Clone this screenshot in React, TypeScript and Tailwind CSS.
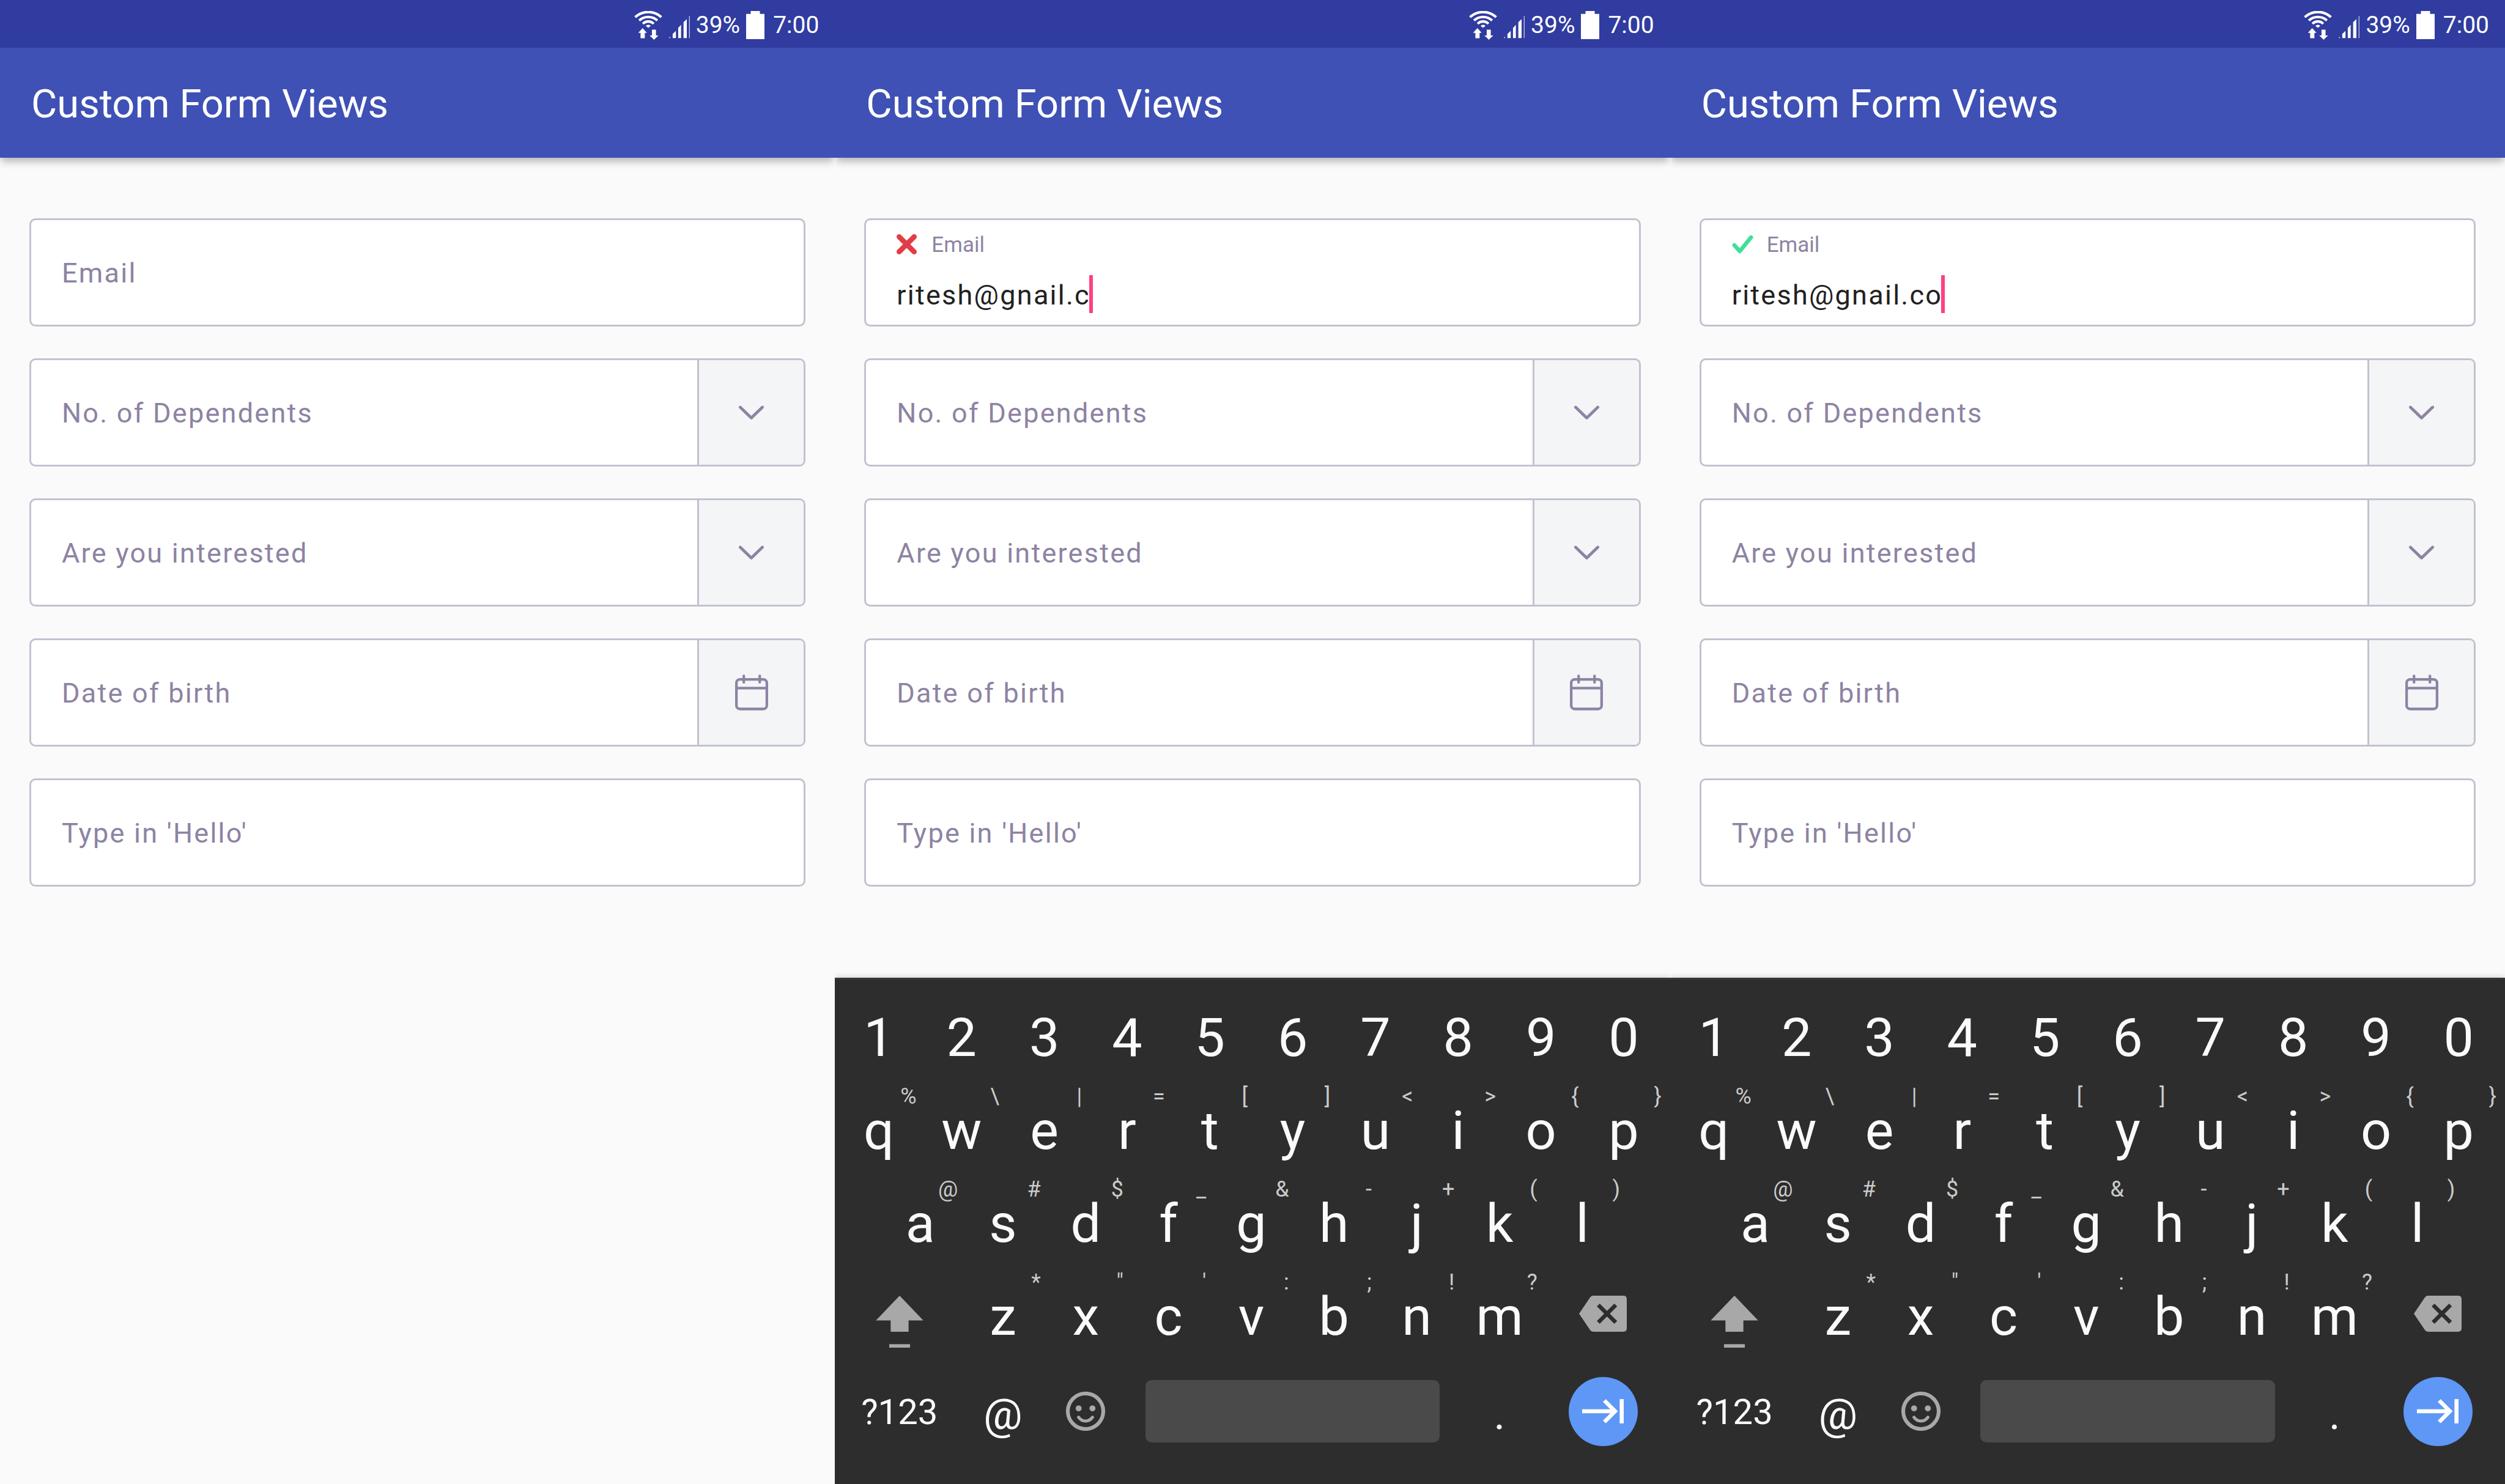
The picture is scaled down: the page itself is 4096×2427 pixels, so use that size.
import React, { useId } from "react";

type EmailState = {
  value: string;
  valid: boolean;
};

function WifiIcon() {
  return (
    <svg viewBox="0 0 146 149" className="h-[47px] w-[46px]" fill="none" stroke="#fff" strokeWidth="13" aria-hidden="true">
      <path d="M5 32A99 99 0 0 1 141 32" />
      <path d="M26 49A70 70 0 0 1 120 49" />
      <path d="M45 66A39 39 0 0 1 101 66" />
      <g fill="#fff" stroke="none">
        <path d="M60 77Q73 66 86 77L73 87Z" />
        <path d="M43.500 89L66 113H55V141H33V113H21Z" />
        <path d="M92 97H113V127H126L103 149L80 127H92Z" />
      </g>
    </svg>
  );
}

function SignalIcon() {
  return (
    <svg viewBox="0 0 112 149" className="h-[47px] w-[35px]" fill="#fff" aria-hidden="true">
      <path d="M2 141L9 134V141Z" />
      <path d="M22 141V119L39 103V141Z" />
      <path d="M51 141V88L66 71V141Z" />
      <path d="M79 141V58L96 42V141Z" />
      <path d="M108 141V27L111 24V141Z" />
    </svg>
  );
}

function BatteryIcon() {
  return (
    <svg viewBox="0 0 32 49" className="h-[46px] w-[30px]" fill="#fff" aria-hidden="true">
      <path d="M8 0H24V5H32V49H0V5H8Z" />
    </svg>
  );
}

function CrossIcon() {
  return (
    <svg viewBox="0 0 35 35" className="size-[33px]" stroke="#e23d46" strokeWidth="9" strokeLinecap="round" aria-hidden="true">
      <path d="M4.500 4.500L30.500 30.500M30.500 4.500L4.500 30.500" />
    </svg>
  );
}

function TickIcon() {
  return (
    <svg viewBox="0 0 37 35" className="h-[33px] w-[35px]" fill="none" stroke="#3fe09a" strokeWidth="7" strokeLinecap="round" strokeLinejoin="round" aria-hidden="true">
      <path d="M4 19L13.500 29.500L33 5.500" />
    </svg>
  );
}

function ChevronIcon() {
  return (
    <svg viewBox="0 0 43 25" className="h-6 w-[41px]" fill="none" stroke="#8d83a3" strokeWidth="5" strokeLinecap="round" strokeLinejoin="round" aria-hidden="true">
      <path d="M2.500 3L21.500 21.500L40.500 3" />
    </svg>
  );
}

function CalendarIcon() {
  return (
    <svg viewBox="0 0 57 62" className="h-[59px] w-[54px]" fill="none" stroke="#8d83a3" strokeWidth="4.500" aria-hidden="true">
      <rect x="2.250" y="8.500" width="52.500" height="51" rx="6" />
      <path d="M2.250 23.500H54.750" />
      <path d="M15 2.500V13.500M42.500 2.500V13.500" strokeLinecap="round" />
    </svg>
  );
}

function ShiftIcon() {
  return (
    <svg viewBox="0 0 82 90" className="h-[85px] w-[78px]" fill="#a8a8a8" aria-hidden="true">
      <path d="M41 0L82 43H56.500V62.500H25.500V43H0Z" />
      <rect x="23" y="84" width="36" height="6" />
    </svg>
  );
}

function DeleteIcon() {
  return (
    <svg viewBox="0 0 82 62" className="h-[59px] w-[78px]" aria-hidden="true">
      <path d="M0 31L19 3Q21 0 24 0H76Q82 0 82 6V56Q82 62 76 62H24Q21 62 19 59Z" fill="#a8a8a8" />
      <path d="M33 16L63 46M63 16L33 46" stroke="#2d2d2d" strokeWidth="7" />
    </svg>
  );
}

function SmileIcon() {
  return (
    <svg viewBox="0 0 68 68" className="size-16" fill="none" aria-hidden="true">
      <circle cx="34" cy="34" r="30.800" stroke="#a8a8a8" strokeWidth="6.500" />
      <circle cx="22" cy="29" r="5.200" fill="#a8a8a8" />
      <circle cx="46" cy="29" r="5.200" fill="#a8a8a8" />
      <path d="M22 44.500Q26.500 51 34 51T46 44.500" stroke="#a8a8a8" strokeWidth="5.500" strokeLinecap="round" />
    </svg>
  );
}

function NextIcon() {
  return (
    <svg viewBox="0 0 72 42" className="h-10 w-[68px]" fill="none" stroke="#fff" strokeWidth="7" aria-hidden="true">
      <path d="M0 21H56" />
      <path d="M38.500 2.500L57 21L38.500 39.500" />
      <path d="M68.500 0V42" />
    </svg>
  );
}

function StatusBar() {
  return (
    <div className="flex h-[78px] items-center justify-end bg-[#303c9f] pt-1 pr-[26px] text-[39px] leading-none text-white">
      <WifiIcon />
      <span className="ml-[10px] flex">
        <SignalIcon />
      </span>
      <span className="ml-[10px]">39%</span>
      <span className="ml-[10px] flex">
        <BatteryIcon />
      </span>
      <time className="ml-[14px]">7:00</time>
    </div>
  );
}

const boxClass =
  "flex h-[177px] overflow-hidden rounded-[10px] border-3 border-[#c4c1d0] bg-white";
const controlClass =
  "h-full min-w-0 flex-1 appearance-none bg-transparent pt-[2px] pl-[50px] text-[45px] tracking-wider text-[#8d83a3] outline-none placeholder:text-[#8d83a3] placeholder:opacity-100";

function Addon({ label, children }: { label: string; children: React.ReactNode }) {
  return (
    <button
      type="button"
      aria-label={label}
      className="flex w-[174px] items-center justify-center border-l-3 border-[#c4c1d0] bg-[#f3f5f7]"
    >
      {children}
    </button>
  );
}

function TextField({ label, children }: { label: string; children?: React.ReactNode }) {
  return (
    <div className={boxClass}>
      <input type="text" aria-label={label} placeholder={label} className={controlClass} />
      {children}
    </div>
  );
}

function SelectField({ label }: { label: string }) {
  return (
    <div className={boxClass}>
      <select aria-label={label} className={controlClass}>
        <option>{label}</option>
      </select>
      <Addon label={label}>
        <ChevronIcon />
      </Addon>
    </div>
  );
}

function ActiveEmailField({ value, valid }: EmailState) {
  const id = useId();
  return (
    <div className={boxClass}>
      <div className="flex flex-1 flex-col pt-[15px] pl-[50px]">
        <div className="flex h-12 items-center">
          <span className="flex w-[57px]">{valid ? <TickIcon /> : <CrossIcon />}</span>
          <label htmlFor={id} className="pt-1 text-[35px] leading-10 text-[#8d83a3]">
            Email
          </label>
        </div>
        <div className="mt-[27px] flex h-[62px] items-center">
          <input
            id={id}
            type="email"
            defaultValue={value}
            className="field-sizing-content bg-transparent pt-1 text-[45px] leading-[58px] tracking-wider text-[#212121] caret-[#ff4081] outline-none"
          />
          <span className="-ml-[2px] h-full w-[6px] bg-[#ff4081]" />
        </div>
      </div>
    </div>
  );
}

const digits = "1234567890".split("");
const topRow = ["q%", "w\\", "e|", "r=", "t[", "y]", "u<", "i>", "o{", "p}"];
const homeRow = ["a@", "s#", "d$", "f_", "g&", "h-", "j+", "k(", "l)"];
const bottomRow = ["z*", 'x"', "c'", "v:", "b;", "n!", "m?"];

function Key({ main, hint }: { main: string; hint?: string }) {
  return (
    <button type="button" className="col-span-2 flex h-[152px] flex-col">
      <span className="h-11 w-full pr-[6px] text-right text-[36px] leading-[44px] text-[#cacaca]">{hint}</span>
      <span className="w-full text-center text-[88px] leading-[68px]">{main}</span>
    </button>
  );
}

function keysOf(row: string[]) {
  return row.map((k) => <Key key={k} main={k[0]} hint={k[1]} />);
}

function Keyboard() {
  return (
    <div className="relative mt-auto border-t-3 border-[#383838] bg-[#2d2d2d] pt-[17px] pr-2 pb-[38px] pl-1 text-[#fafafa] shadow-[0_-2px_8px_rgba(0,0,0,0.14)]">
      <div className="grid grid-cols-20">{keysOf(digits)}</div>
      <div className="grid grid-cols-20">{keysOf(topRow)}</div>
      <div className="grid grid-cols-20">
        <span />
        {keysOf(homeRow)}
      </div>
      <div className="grid grid-cols-20">
        <button type="button" aria-label="Shift" className="col-span-3 flex items-center justify-center pt-5">
          <ShiftIcon />
        </button>
        {keysOf(bottomRow)}
        <button type="button" aria-label="Delete" className="col-span-3 flex items-center justify-center pb-[6px]">
          <DeleteIcon />
        </button>
      </div>
      <div className="grid h-[162px] grid-cols-20">
        <button type="button" className="col-span-3 pt-[2px] text-[58px]">
          ?123
        </button>
        <button type="button" className="col-span-2 pt-2 text-[71px] leading-none">
          @
        </button>
        <button type="button" aria-label="Emoji" className="col-span-2 flex items-center justify-center">
          <SmileIcon />
        </button>
        <button type="button" aria-label="Space" className="col-span-8 mx-[30px] h-[102px] self-center rounded-[10px] bg-[#4a4a4a]" />
        <button type="button" className="col-span-2 pt-2 text-[71px] leading-none">
          .
        </button>
        <button
          type="button"
          aria-label="Next"
          className="col-span-3 flex size-[113px] items-center justify-center self-center justify-self-center rounded-full bg-[#5e97f6]"
        >
          <NextIcon />
        </button>
      </div>
    </div>
  );
}

function Phone({ email }: { email?: EmailState }) {
  return (
    <section className="flex flex-col overflow-hidden bg-[#fafafa]">
      <header className="shadow-[0_8px_12px_-2px_rgba(0,0,0,0.28)]">
        <StatusBar />
        <div className="flex h-[180px] items-center bg-[#3f51b5] pt-1 pl-[51px]">
          <h1 className="text-[65px] leading-none text-white">Custom Form Views</h1>
        </div>
      </header>
      <form className="flex flex-col gap-[52px] px-12 pt-[99px] pb-12">
        {email ? <ActiveEmailField {...email} /> : <TextField label="Email" />}
        <SelectField label="No. of Dependents" />
        <SelectField label="Are you interested" />
        <TextField label="Date of birth">
          <Addon label="Choose date">
            <CalendarIcon />
          </Addon>
        </TextField>
        <TextField label="Type in 'Hello'" />
      </form>
      {email && <Keyboard />}
    </section>
  );
}

export default function App() {
  return (
    <main className="grid min-h-screen grid-cols-3 bg-[#fafafa] font-[Roboto,sans-serif]">
      <Phone />
      <Phone email={{ value: "ritesh@gnail.c", valid: false }} />
      <Phone email={{ value: "ritesh@gnail.co", valid: true }} />
    </main>
  );
}
